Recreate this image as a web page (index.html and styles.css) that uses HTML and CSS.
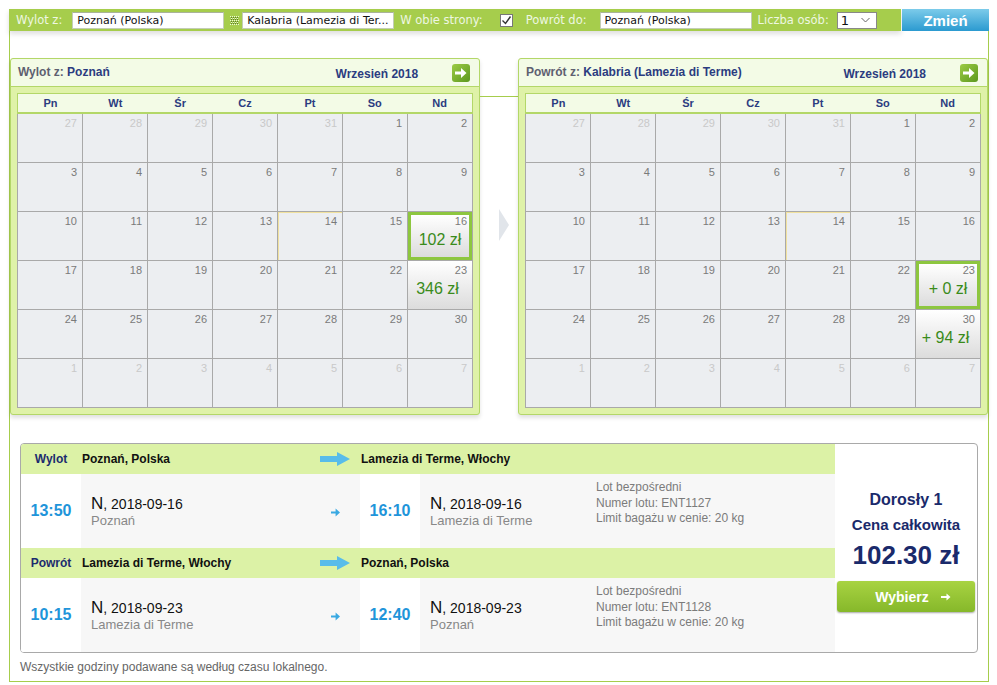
FILE: index.html
```html
<!doctype html>
<html lang="pl">
  <head>
    <meta charset="UTF-8" />
    <title>Wybór lotu</title>
    <link rel="stylesheet" href="styles.css">
  </head>
  <body>
    <div class="page">
      <form class="search-bar">
        <div class="search-fields">
          <label class="lbl first">Wylot z:</label>
          <input class="field" type="text" value="Poznań (Polska)" />
          <svg class="swap" width="9" height="9" viewBox="0 0 9 9">
            <g fill="#eaf6d6">
              <rect x="0" y="0" width="1" height="1"/><rect x="2" y="0" width="1" height="1"/><rect x="4" y="0" width="1" height="1"/><rect x="6" y="0" width="1" height="1"/><rect x="8" y="0" width="1" height="1"/>
              <rect x="1" y="2" width="1" height="1"/><rect x="3" y="2" width="1" height="1"/><rect x="5" y="2" width="1" height="1"/><rect x="7" y="2" width="1" height="1"/>
              <rect x="0" y="4" width="1" height="1"/><rect x="2" y="4" width="1" height="1"/><rect x="4" y="4" width="1" height="1"/><rect x="6" y="4" width="1" height="1"/><rect x="8" y="4" width="1" height="1"/>
              <rect x="1" y="6" width="1" height="1"/><rect x="3" y="6" width="1" height="1"/><rect x="5" y="6" width="1" height="1"/><rect x="7" y="6" width="1" height="1"/>
              <rect x="0" y="8" width="1" height="1"/><rect x="2" y="8" width="1" height="1"/><rect x="4" y="8" width="1" height="1"/><rect x="6" y="8" width="1" height="1"/><rect x="8" y="8" width="1" height="1"/>
            </g>
            <g fill="#5f7f2a">
              <rect x="1" y="1" width="1" height="1"/><rect x="3" y="1" width="1" height="1"/><rect x="5" y="1" width="1" height="1"/><rect x="7" y="1" width="1" height="1"/>
              <rect x="1" y="3" width="1" height="1"/><rect x="3" y="3" width="1" height="1"/><rect x="5" y="3" width="1" height="1"/><rect x="7" y="3" width="1" height="1"/>
              <rect x="1" y="5" width="1" height="1"/><rect x="3" y="5" width="1" height="1"/><rect x="5" y="5" width="1" height="1"/><rect x="7" y="5" width="1" height="1"/>
              <rect x="1" y="7" width="1" height="1"/><rect x="3" y="7" width="1" height="1"/><rect x="5" y="7" width="1" height="1"/><rect x="7" y="7" width="1" height="1"/>
            </g>
          </svg>
          <input class="field" type="text" value="Kalabria (Lamezia di Ter..." />
          <label class="lbl">W obie strony:</label>
          <span class="check">
            <svg width="11" height="11" viewBox="0 0 11 11"><path d="M1.5 5.5 L4.5 8.5 L9.5 1.5" fill="none" stroke="#333" stroke-width="1.4"/></svg>
          </span>
          <label class="lbl">Powrót do:</label>
          <input class="field" type="text" value="Poznań (Polska)" />
          <label class="lbl">Liczba osób:</label>
          <span class="select">
            <span>1</span>
            <svg width="9" height="6" viewBox="0 0 9 6"><path d="M0.5 1 L4.5 5 L8.5 1" fill="none" stroke="#666" stroke-width="1"/></svg>
          </span>
        </div>
        <button type="button" class="btn-change">Zmień</button>
      </form>

      <div class="frame">
        <div class="calendars">
          <div class="cal">
            <div class="cal-head">
              <span class="cal-title"><span class="muted">Wylot z:</span> Poznań</span>
              <span class="cal-month">Wrzesień 2018</span>
              <span class="next">
                <svg width="12" height="10" viewBox="0 0 12 10"><path d="M0 3.5 H6 V0 L11.5 5 L6 10 V6.5 H0 Z" fill="#fff"/></svg>
              </span>
            </div>
            <div class="cal-body">
              <div class="weekdays">
                <span>Pn</span><span>Wt</span><span>Śr</span><span>Cz</span><span>Pt</span><span>So</span><span>Nd</span>
              </div>
              <div class="days">
                <div class="day out">27</div><div class="day out">28</div><div class="day out">29</div><div class="day out">30</div><div class="day out">31</div><div class="day">1</div><div class="day">2</div>
                <div class="day">3</div><div class="day">4</div><div class="day">5</div><div class="day">6</div><div class="day">7</div><div class="day">8</div><div class="day">9</div>
                <div class="day">10</div><div class="day">11</div><div class="day">12</div><div class="day">13</div><div class="day today">14</div><div class="day">15</div>
                <div class="day fare sel">16<span class="price">102 zł</span></div>
                <div class="day">17</div><div class="day">18</div><div class="day">19</div><div class="day">20</div><div class="day">21</div><div class="day">22</div>
                <div class="day fare">23<span class="price">346 zł</span></div>
                <div class="day">24</div><div class="day">25</div><div class="day">26</div><div class="day">27</div><div class="day">28</div><div class="day">29</div><div class="day">30</div>
                <div class="day out">1</div><div class="day out">2</div><div class="day out">3</div><div class="day out">4</div><div class="day out">5</div><div class="day out">6</div><div class="day out">7</div>
              </div>
            </div>
          </div>

          <div class="cal-link">
            <div class="link-line"></div>
            <div class="link-arrow"></div>
          </div>

          <div class="cal">
            <div class="cal-head">
              <span class="cal-title"><span class="muted">Powrót z:</span> Kalabria (Lamezia di Terme)</span>
              <span class="cal-month">Wrzesień 2018</span>
              <span class="next">
                <svg width="12" height="10" viewBox="0 0 12 10"><path d="M0 3.5 H6 V0 L11.5 5 L6 10 V6.5 H0 Z" fill="#fff"/></svg>
              </span>
            </div>
            <div class="cal-body">
              <div class="weekdays">
                <span>Pn</span><span>Wt</span><span>Śr</span><span>Cz</span><span>Pt</span><span>So</span><span>Nd</span>
              </div>
              <div class="days">
                <div class="day out">27</div><div class="day out">28</div><div class="day out">29</div><div class="day out">30</div><div class="day out">31</div><div class="day">1</div><div class="day">2</div>
                <div class="day">3</div><div class="day">4</div><div class="day">5</div><div class="day">6</div><div class="day">7</div><div class="day">8</div><div class="day">9</div>
                <div class="day">10</div><div class="day">11</div><div class="day">12</div><div class="day">13</div><div class="day today">14</div><div class="day">15</div><div class="day">16</div>
                <div class="day">17</div><div class="day">18</div><div class="day">19</div><div class="day">20</div><div class="day">21</div><div class="day">22</div>
                <div class="day fare sel">23<span class="price">+ 0 zł</span></div>
                <div class="day">24</div><div class="day">25</div><div class="day">26</div><div class="day">27</div><div class="day">28</div><div class="day">29</div>
                <div class="day fare">30<span class="price">+ 94 zł</span></div>
                <div class="day out">1</div><div class="day out">2</div><div class="day out">3</div><div class="day out">4</div><div class="day out">5</div><div class="day out">6</div><div class="day out">7</div>
              </div>
            </div>
          </div>
        </div>

        <div class="result">
          <div class="legs">
            <div class="leg-head">
              <span class="dir">Wylot</span>
              <span class="from">Poznań, Polska
                <svg width="30" height="14" viewBox="0 0 30 14"><path d="M0 4 H17 V0 L30 7 L17 14 V10 H0 Z" fill="#58bcea"/></svg>
              </span>
              <span class="to">Lamezia di Terme, Włochy</span>
            </div>
            <div class="leg-body">
              <div class="time">13:50</div>
              <div class="date">
                <div>
                  <div class="date-main"><span class="wd">N</span>, 2018-09-16</div>
                  <div class="city">Poznań</div>
                </div>
                <svg class="small-arrow" width="9" height="9" viewBox="0 0 9 9"><path d="M0 3.4 H4.6 V0.6 L9 4.5 L4.6 8.4 V5.6 H0 Z" fill="#3aa9e2"/></svg>
              </div>
              <div class="time">16:10</div>
              <div class="date">
                <div>
                  <div class="date-main"><span class="wd">N</span>, 2018-09-16</div>
                  <div class="city">Lamezia di Terme</div>
                </div>
              </div>
              <div class="info">
                Lot bezpośredni<br />
                Numer lotu: ENT1127<br />
                Limit bagażu w cenie: 20 kg
              </div>
            </div>

            <div class="leg-head">
              <span class="dir">Powrót</span>
              <span class="from">Lamezia di Terme, Włochy
                <svg width="30" height="14" viewBox="0 0 30 14"><path d="M0 4 H17 V0 L30 7 L17 14 V10 H0 Z" fill="#58bcea"/></svg>
              </span>
              <span class="to">Poznań, Polska</span>
            </div>
            <div class="leg-body">
              <div class="time">10:15</div>
              <div class="date">
                <div>
                  <div class="date-main"><span class="wd">N</span>, 2018-09-23</div>
                  <div class="city">Lamezia di Terme</div>
                </div>
                <svg class="small-arrow" width="9" height="9" viewBox="0 0 9 9"><path d="M0 3.4 H4.6 V0.6 L9 4.5 L4.6 8.4 V5.6 H0 Z" fill="#3aa9e2"/></svg>
              </div>
              <div class="time">12:40</div>
              <div class="date">
                <div>
                  <div class="date-main"><span class="wd">N</span>, 2018-09-23</div>
                  <div class="city">Poznań</div>
                </div>
              </div>
              <div class="info">
                Lot bezpośredni<br />
                Numer lotu: ENT1128<br />
                Limit bagażu w cenie: 20 kg
              </div>
            </div>
          </div>

          <div class="total">
            <div class="pax">Dorosły 1</div>
            <div class="total-label">Cena całkowita</div>
            <div class="total-price">102.30 zł</div>
            <button type="button" class="btn-choose">Wybierz
              <svg width="10" height="8" viewBox="0 0 10 8"><path d="M0 3.1 H5.5 V0.5 L9.5 4 L5.5 7.5 V4.9 H0 Z" fill="#fff"/></svg>
            </button>
          </div>
        </div>

        <p class="note">Wszystkie godziny podawane są według czasu lokalnego.</p>
      </div>
    </div>
  </body>
</html>
```

FILE: styles.css
```css
body {
  margin: 0;
  font-family: "Liberation Sans", Arial, sans-serif;
  background: #fff;
}
.page {
  width: 980px;
  margin: 9px 0 0 9px;
}

/* top search bar */
.search-bar {
  display: flex;
  height: 22px;
  margin: 0;
}
.search-fields {
  flex: 1;
  display: flex;
  align-items: center;
  background: #a6cd4c;
  font: 11.5px "DejaVu Sans", Verdana, sans-serif;
  color: #eef7e2;
  box-shadow: 0 3px 5px rgba(0, 0, 0, 0.13);
}
.lbl {
  margin-left: 6px;
  margin-right: 13px;
}
.lbl.first {
  margin-left: 7px;
  margin-right: 10px;
}
.field {
  width: 152px;
  height: 17px;
  box-sizing: border-box;
  border: 1px solid #c3cdb5;
  border-top-color: #a9b39b;
  padding: 0 2px 0 4px;
  font: 11px "DejaVu Sans", Verdana, sans-serif;
  color: #111;
  background: #fff;
}
.swap {
  margin: 0 3px 0 6px;
}
.check {
  width: 13px;
  height: 13px;
  box-sizing: border-box;
  border: 1px solid #777;
  background: #fff;
  display: flex;
  align-items: center;
  justify-content: center;
  margin-left: 4px;
  margin-right: 7px;
}
.select {
  width: 40px;
  height: 17px;
  box-sizing: border-box;
  border: 1px solid #888;
  background: #fff;
  display: flex;
  align-items: center;
  justify-content: space-between;
  padding: 0 6px 0 3px;
  font: 13px "DejaVu Sans", Verdana, sans-serif;
  color: #111;
  margin-left: -5px;
}
.btn-change {
  width: 87px;
  margin-left: 1px;
  border: none;
  padding: 0;
  background: linear-gradient(#7ccbea, #2b9ad0);
  color: #fff;
  font: bold 15px "Liberation Sans", Arial, sans-serif;
}

/* frame with calendars and result */
.frame {
  border: 1px solid #a6cd4c;
  border-top: none;
  padding: 27px 0 7px 0;
}
.calendars {
  display: flex;
}
.cal {
  width: 470px;
  border: 1px solid #b3d768;
  border-radius: 3px;
  background: #dff2a8;
  box-shadow: 0 3px 4px rgba(0, 0, 0, 0.12);
}
.cal-head {
  height: 27px;
  display: flex;
  align-items: center;
  padding: 0 9px 0 7px;
  background: #f3fbe6;
  border-bottom: 1px solid #b3d768;
  border-radius: 3px 3px 0 0;
  font-size: 12px;
  font-weight: bold;
  color: #2b3c80;
}
.cal-title {
  margin-top: -2px;
}
.muted {
  color: #5e6070;
}
.cal-month {
  margin-left: auto;
  margin-right: 34px;
  margin-top: 2px;
}
.next {
  width: 18px;
  height: 18px;
  border-radius: 3px;
  background: linear-gradient(135deg, #9ccb45, #5c981e);
  display: flex;
  align-items: center;
  justify-content: center;
}
.cal-body {
  padding: 6px;
}
.weekdays {
  display: grid;
  grid-template-columns: repeat(7, 1fr);
  height: 18px;
  align-items: center;
  background: #f3fbe6;
  border: 1px solid #b3d768;
  border-bottom-width: 2px;
  font-size: 11px;
  font-weight: bold;
  color: #2b3c80;
  text-align: center;
}
.days {
  display: grid;
  grid-template-columns: repeat(7, 1fr);
  grid-auto-rows: 48px;
  gap: 1px;
  background: #a9a9a9;
  border: 1px solid #a9a9a9;
  border-top: none;
}
.day {
  background: #eceef1;
  font-size: 11px;
  color: #7a7a7a;
  text-align: right;
  padding: 3px 5px 0 0;
  box-sizing: border-box;
}
.day.out {
  color: #c9c9c9;
}
.day.today {
  box-shadow: inset 1px 1px 0 #f1e19e;
}
.day.fare {
  background: linear-gradient(#ffffff, #dcdcdc);
}
.day.sel {
  border: 3px solid #8dc63f;
  padding: 0 2px 0 0;
}
.price {
  display: block;
  text-align: center;
  font-size: 16px;
  color: #3a8b1b;
  margin-top: 4px;
}
.day.sel .price {
  margin-top: 4px;
  padding-left: 2px;
}
.cal-link {
  width: 38px;
}
.link-line {
  height: 1px;
  background: #a6cd4c;
  margin-top: 38px;
}
.link-arrow {
  width: 0;
  height: 0;
  margin: 112px 0 0 19px;
  border-left: 10px solid #e1e5ea;
  border-top: 16px solid transparent;
  border-bottom: 16px solid transparent;
}

/* result */
.result {
  display: flex;
  margin: 28px 10px 0 10px;
  border: 1px solid #a9a9a9;
  border-radius: 4px;
  overflow: hidden;
}
.legs {
  width: 814px;
}
.leg-head {
  display: grid;
  grid-template-columns: 60px 279px 1fr;
  height: 30px;
  align-items: center;
  background: #dcf2a6;
  font-size: 12px;
  font-weight: bold;
  color: #111;
}
.leg-head .dir {
  text-align: center;
  color: #1c2c6e;
}
.leg-head .from {
  display: flex;
  justify-content: space-between;
  align-items: center;
  padding: 0 10px 0 1px;
}
.leg-head .to {
  padding-left: 1px;
}
.leg-body {
  display: grid;
  grid-template-columns: 60px 279px 60px 176px 1fr;
  height: 74px;
  background: #f7f7f7;
}
.time {
  background: #fff;
  display: flex;
  align-items: center;
  justify-content: center;
  font-size: 16px;
  font-weight: bold;
  color: #1f95da;
}
.date {
  display: flex;
  align-items: center;
  justify-content: space-between;
  padding: 0 20px 0 10px;
}
.date-main {
  font-size: 14px;
  color: #111;
  line-height: 17px;
}
.wd {
  font-size: 17px;
}
.city {
  font-size: 13px;
  color: #888;
  line-height: 15px;
}
.small-arrow {
  margin-top: 2px;
}
.info {
  padding-top: 6px;
  font-size: 12px;
  line-height: 15.5px;
  color: #7b7b7b;
}
.total {
  flex: 1;
  text-align: center;
  padding-top: 44px;
  color: #1a2a6b;
  font-weight: bold;
}
.pax {
  font-size: 16px;
  line-height: 24px;
}
.total-label {
  font-size: 15px;
  line-height: 26px;
}
.total-price {
  font-size: 26px;
  line-height: 34px;
}
.btn-choose {
  display: flex;
  align-items: center;
  justify-content: center;
  gap: 12px;
  width: 138px;
  height: 31px;
  margin: 9px 0 0 2px;
  padding: 0 0 0 14px;
  border: none;
  border-radius: 3px;
  background: linear-gradient(#a8d342, #86b82a);
  box-shadow: 0 1px 2px rgba(0, 0, 0, 0.35);
  color: #fff;
  font: bold 14px "Liberation Sans", Arial, sans-serif;
}
.note {
  margin: 7px 0 0 10px;
  font-size: 12px;
  line-height: 14px;
  color: #666;
}
```
